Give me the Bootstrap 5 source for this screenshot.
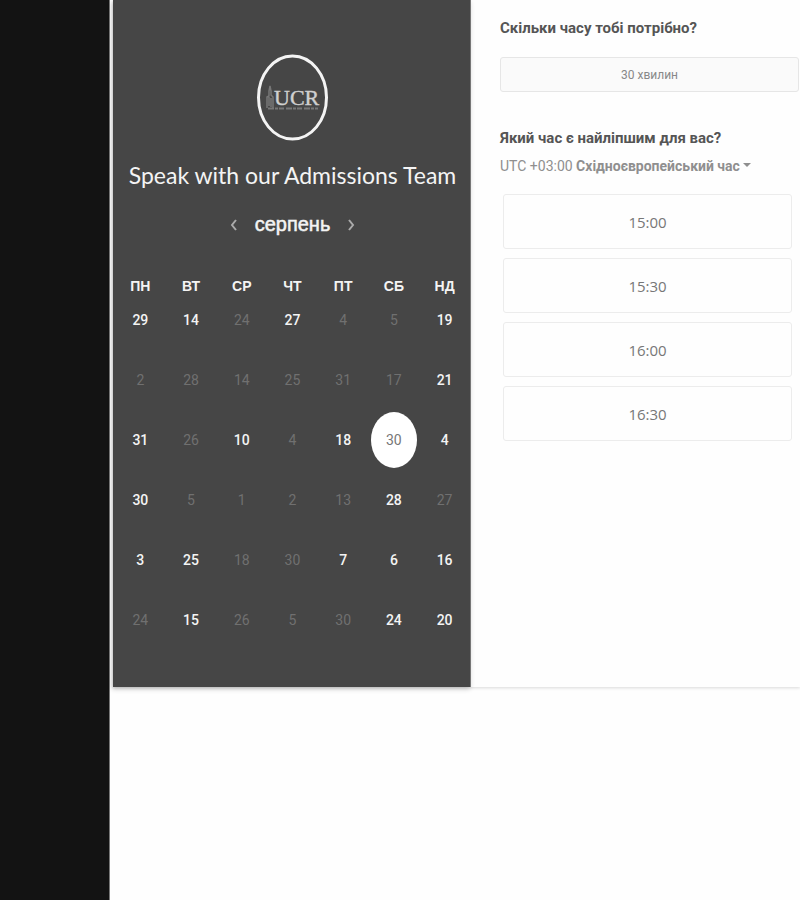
<!DOCTYPE html>
<html lang="uk">
<head>
<meta charset="utf-8">
<meta name="viewport" content="width=device-width, initial-scale=1">
<title>Speak with our Admissions Team</title>
<link href="https://cdn.jsdelivr.net/npm/bootstrap@5.3.0/dist/css/bootstrap.min.css" rel="stylesheet">
<style>
  body { font-family: Roboto, "Liberation Sans", Arial, sans-serif; background: #fefefe; color: #555; }
  .side-strip { flex: 0 0 110px; background: #131313; border-right: 1px solid #777; }
  .scheduler { margin-left: 3px; min-height: 687px; background: #fefefe; box-shadow: 0 1px 3px rgba(0, 0, 0, .15); }
  .calendar-panel { flex: 0 0 358px; padding: 54px 0 35px 2px; background: #464646; border-right: 1px solid #777; color: #f4f4f4; box-shadow: -1px 2px 5px rgba(0, 0, 0, .2); }
  .brand-logo { width: 72px; height: 88px; }
  .meeting-title { margin-top: 16px; font: 400 23px/34px Lato, sans-serif; white-space: nowrap; }
  .month-nav { height: 36px; margin-top: 14px; gap: 16px; }
  .month-name { font: 400 20px/32px "Liberation Sans", Arial, sans-serif; -webkit-text-stroke: 0.5px; }
  .month-arrow { width: 10px; height: 32px; color: #aaa; }
  .plain-btn { padding: 0; border: 0; background: none; line-height: 1; }
  .days { margin-top: 38px; table-layout: fixed; text-align: center; }
  .days th { height: 12px; padding: 0; font: 700 14px/12px "Liberation Sans", Arial, sans-serif; }
  .days td { height: 60px; padding: 0; vertical-align: top; }
  .day { width: 46px; height: 56px; border-radius: 50%; font-size: 14px; font-weight: 500; color: #f4f4f4; }
  .day:disabled { color: #707070; font-weight: 400; }
  .day.chosen { background: #fff; color: #777; font-weight: 400; }
  .booking { padding: 16px 1px 16px 29px; }
  .question { font-size: 15px; line-height: 24px; font-weight: 700; color: #555; }
  .duration { height: 35px; margin-top: 17px; border: 1px solid #e6e6e6; border-radius: 3px; background: #fafafa; color: #888; font-size: 12px; }
  .second-question { margin-top: 34px; }
  .zone { margin-top: 4px; font-size: 14px; line-height: 24px; color: #8f8f8f; }
  .slots { margin-top: 16px; padding: 0 7px 0 3px; gap: 9px; }
  .slot { height: 55px; border: 1px solid #ececec; border-radius: 3px; background: #fefefe; color: #777; font: 400 15px/24px "Open Sans", sans-serif; }
</style>
</head>
<body>
<div class="d-flex min-vh-100">
  <aside class="side-strip"></aside>
  <main class="scheduler d-flex flex-grow-1 align-self-start">
    <section class="calendar-panel d-flex flex-column">
      <svg class="brand-logo mx-auto" viewBox="0 0 72 88" role="img" aria-label="UCR">
        <ellipse cx="35.500" cy="43.500" rx="34" ry="41.500" fill="none" stroke="#f4f4f4" stroke-width="3"/>
        <path d="M10 54V43l2-1v-5l1-5 1 5v4l2 2v11M12 43v9M14 44v9" fill="none" stroke="#777" stroke-width="1.500"/>
        <path d="M11 54.500h50" stroke="#777" stroke-width="2" stroke-dasharray="6 1 3 1 5 2"/>
        <text x="17" y="51" font-family="Liberation Serif, serif" font-size="22" fill="#d0d0d0" stroke="#d0d0d0" stroke-width=".4">UCR</text>
      </svg>
      <h1 class="meeting-title text-center mb-0">Speak with our Admissions Team</h1>
      <div class="month-nav d-flex justify-content-center align-items-center">
        <button type="button" class="plain-btn month-arrow" aria-label="Попередній місяць"><svg width="8" height="12" viewBox="0 0 8 12" fill="none" stroke="currentColor" stroke-width="2"><path d="M6 1 2 6l4 5"/></svg></button>
        <h2 class="month-name mb-0">серпень</h2>
        <button type="button" class="plain-btn month-arrow" aria-label="Наступний місяць"><svg width="8" height="12" viewBox="0 0 8 12" fill="none" stroke="currentColor" stroke-width="2"><path d="m2 1 4 5-4 5"/></svg></button>
      </div>
      <table class="days w-100">
        <thead><tr><th scope="col">ПН</th><th scope="col">ВТ</th><th scope="col">СР</th><th scope="col">ЧТ</th><th scope="col">ПТ</th><th scope="col">СБ</th><th scope="col">НД</th></tr></thead>
        <tbody>
          <tr><td><button type="button" class="plain-btn day">29</button></td><td><button type="button" class="plain-btn day">14</button></td><td><button type="button" class="plain-btn day" disabled>24</button></td><td><button type="button" class="plain-btn day">27</button></td><td><button type="button" class="plain-btn day" disabled>4</button></td><td><button type="button" class="plain-btn day" disabled>5</button></td><td><button type="button" class="plain-btn day">19</button></td></tr>
          <tr><td><button type="button" class="plain-btn day" disabled>2</button></td><td><button type="button" class="plain-btn day" disabled>28</button></td><td><button type="button" class="plain-btn day" disabled>14</button></td><td><button type="button" class="plain-btn day" disabled>25</button></td><td><button type="button" class="plain-btn day" disabled>31</button></td><td><button type="button" class="plain-btn day" disabled>17</button></td><td><button type="button" class="plain-btn day">21</button></td></tr>
          <tr><td><button type="button" class="plain-btn day">31</button></td><td><button type="button" class="plain-btn day" disabled>26</button></td><td><button type="button" class="plain-btn day">10</button></td><td><button type="button" class="plain-btn day" disabled>4</button></td><td><button type="button" class="plain-btn day">18</button></td><td><button type="button" class="plain-btn day chosen" aria-pressed="true">30</button></td><td><button type="button" class="plain-btn day">4</button></td></tr>
          <tr><td><button type="button" class="plain-btn day">30</button></td><td><button type="button" class="plain-btn day" disabled>5</button></td><td><button type="button" class="plain-btn day" disabled>1</button></td><td><button type="button" class="plain-btn day" disabled>2</button></td><td><button type="button" class="plain-btn day" disabled>13</button></td><td><button type="button" class="plain-btn day">28</button></td><td><button type="button" class="plain-btn day" disabled>27</button></td></tr>
          <tr><td><button type="button" class="plain-btn day">3</button></td><td><button type="button" class="plain-btn day">25</button></td><td><button type="button" class="plain-btn day" disabled>18</button></td><td><button type="button" class="plain-btn day" disabled>30</button></td><td><button type="button" class="plain-btn day">7</button></td><td><button type="button" class="plain-btn day">6</button></td><td><button type="button" class="plain-btn day">16</button></td></tr>
          <tr><td><button type="button" class="plain-btn day" disabled>24</button></td><td><button type="button" class="plain-btn day">15</button></td><td><button type="button" class="plain-btn day" disabled>26</button></td><td><button type="button" class="plain-btn day" disabled>5</button></td><td><button type="button" class="plain-btn day" disabled>30</button></td><td><button type="button" class="plain-btn day">24</button></td><td><button type="button" class="plain-btn day">20</button></td></tr>
        </tbody>
      </table>
    </section>
    <section class="booking flex-grow-1">
      <h3 class="question mb-0">Скільки часу тобі потрібно?</h3>
      <button type="button" class="duration d-block w-100">30 хвилин</button>
      <h3 class="question second-question mb-0">Який час є найліпшим для вас?</h3>
      <button type="button" class="plain-btn zone dropdown-toggle text-nowrap">UTC +03:00 <b>Східноєвропейський час</b></button>
      <div class="slots d-grid">
        <button type="button" class="slot">15:00</button>
        <button type="button" class="slot">15:30</button>
        <button type="button" class="slot">16:00</button>
        <button type="button" class="slot">16:30</button>
      </div>
    </section>
  </main>
</div>
<script src="https://cdn.jsdelivr.net/npm/bootstrap@5.3.0/dist/js/bootstrap.bundle.min.js"></script>
</body>
</html>
